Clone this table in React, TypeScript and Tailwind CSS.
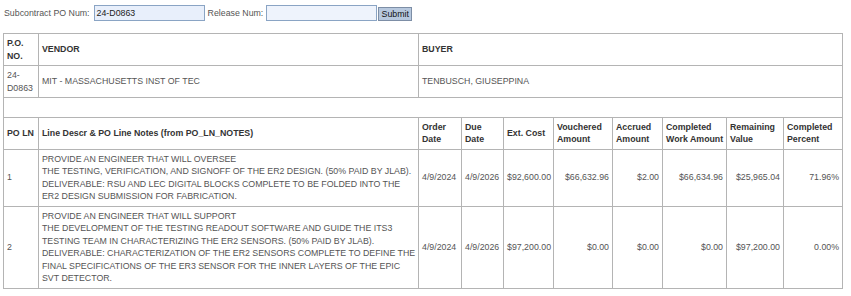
import React from 'react';

const cols = [35, 380, 43, 42, 50, 59, 50, 64, 57, 59];

const lines1 = [
  'PROVIDE AN ENGINEER THAT WILL OVERSEE',
  'THE TESTING, VERIFICATION, AND SIGNOFF OF THE ER2 DESIGN. (50% PAID BY JLAB).',
  'DELIVERABLE: RSU AND LEC DIGITAL BLOCKS COMPLETE TO BE FOLDED INTO THE',
  'ER2 DESIGN SUBMISSION FOR FABRICATION.',
];

const lines2 = [
  'PROVIDE AN ENGINEER THAT WILL SUPPORT',
  'THE DEVELOPMENT OF THE TESTING READOUT SOFTWARE AND GUIDE THE ITS3',
  'TESTING TEAM IN CHARACTERIZING THE ER2 SENSORS. (50% PAID BY JLAB).',
  'DELIVERABLE: CHARACTERIZATION OF THE ER2 SENSORS COMPLETE TO DEFINE THE',
  'FINAL SPECIFICATIONS OF THE ER3 SENSOR FOR THE INNER LAYERS OF THE EPIC',
  'SVT DETECTOR.',
];

const rows = [
  {
    ln: '1',
    lines: lines1,
    order: '4/9/2024',
    due: '4/9/2026',
    cost: '$92,600.00',
    vouchered: '$66,632.96',
    accrued: '$2.00',
    completed: '$66,634.96',
    remaining: '$25,965.04',
    percent: '71.96%',
  },
  {
    ln: '2',
    lines: lines2,
    order: '4/9/2024',
    due: '4/9/2026',
    cost: '$97,200.00',
    vouchered: '$0.00',
    accrued: '$0.00',
    completed: '$0.00',
    remaining: '$97,200.00',
    percent: '0.00%',
  },
];

const th = 'border border-[#b4b4b4] px-[3px] py-[3px] text-left align-middle font-bold text-[#333]';
const td = 'border border-[#b4b4b4] px-[3px] py-[3px] align-middle text-[#555]';

const App: React.FC = () => {
  return (
    <div
      className="min-h-screen bg-white text-[8.8px] leading-[12.5px] text-[#555]"
      style={{ fontFamily: '"Liberation Sans", Arial, sans-serif' }}
    >
      {/* Search form */}
      <div className="flex items-center pl-[4px] pt-[5px]">
        <span className="mr-[4px]">Subcontract PO Num:</span>
        <div className="flex h-[16px] w-[111px] items-center border border-[#8aa4c4] bg-[#e8effb] px-[2px] text-[#222]">
          24-D0863
        </div>
        <span className="ml-[3px] mr-[3px]">Release Num:</span>
        <div className="h-[16px] w-[111px] border border-[#8aa4c4] bg-[#eef3fc]" />
        <button className="ml-[1px] mt-[2px] h-[14px] w-[34px] border border-[#7d8ea6] bg-[#b7c8de] text-[8.8px] leading-[12px] text-[#111]">
          Submit
        </button>
      </div>

      {/* PO table */}
      <table className="ml-[3px] mt-[12px] w-[840px] table-fixed border-collapse">
        <colgroup>
          {cols.map((w, i) => (
            <col key={i} style={{ width: w }} />
          ))}
        </colgroup>
        <tbody>
          <tr>
            <th className={th}>
              P.O.
              <br />
              NO.
            </th>
            <th className={th}>VENDOR</th>
            <th className={th} colSpan={8}>
              BUYER
            </th>
          </tr>
          <tr>
            <td className={td}>
              24-
              <br />
              D0863
            </td>
            <td className={td}>MIT - MASSACHUSETTS INST OF TEC</td>
            <td className={td} colSpan={8}>
              TENBUSCH, GIUSEPPINA
            </td>
          </tr>
          <tr>
            <td className={td} colSpan={10}>
              &nbsp;
            </td>
          </tr>
          <tr>
            <th className={th}>PO LN</th>
            <th className={th}>Line Descr &amp; PO Line Notes (from PO_LN_NOTES)</th>
            <th className={th}>
              Order
              <br />
              Date
            </th>
            <th className={th}>
              Due
              <br />
              Date
            </th>
            <th className={th}>Ext. Cost</th>
            <th className={th}>
              Vouchered
              <br />
              Amount
            </th>
            <th className={th}>
              Accrued
              <br />
              Amount
            </th>
            <th className={`${th} whitespace-nowrap`}>
              Completed
              <br />
              Work Amount
            </th>
            <th className={th}>
              Remaining
              <br />
              Value
            </th>
            <th className={th}>
              Completed
              <br />
              Percent
            </th>
          </tr>
          {rows.map((r) => (
            <tr key={r.ln}>
              <td className={td}>{r.ln}</td>
              <td className={`${td} whitespace-nowrap`}>
                {r.lines.map((l, i) => (
                  <div key={i}>{l}</div>
                ))}
              </td>
              <td className={`${td} whitespace-nowrap`}>{r.order}</td>
              <td className={`${td} whitespace-nowrap`}>{r.due}</td>
              <td className={`${td} whitespace-nowrap text-right`}>{r.cost}</td>
              <td className={`${td} text-right`}>{r.vouchered}</td>
              <td className={`${td} text-right`}>{r.accrued}</td>
              <td className={`${td} text-right`}>{r.completed}</td>
              <td className={`${td} text-right`}>{r.remaining}</td>
              <td className={`${td} text-right`}>{r.percent}</td>
            </tr>
          ))}
        </tbody>
      </table>
    </div>
  );
};

export default App;
